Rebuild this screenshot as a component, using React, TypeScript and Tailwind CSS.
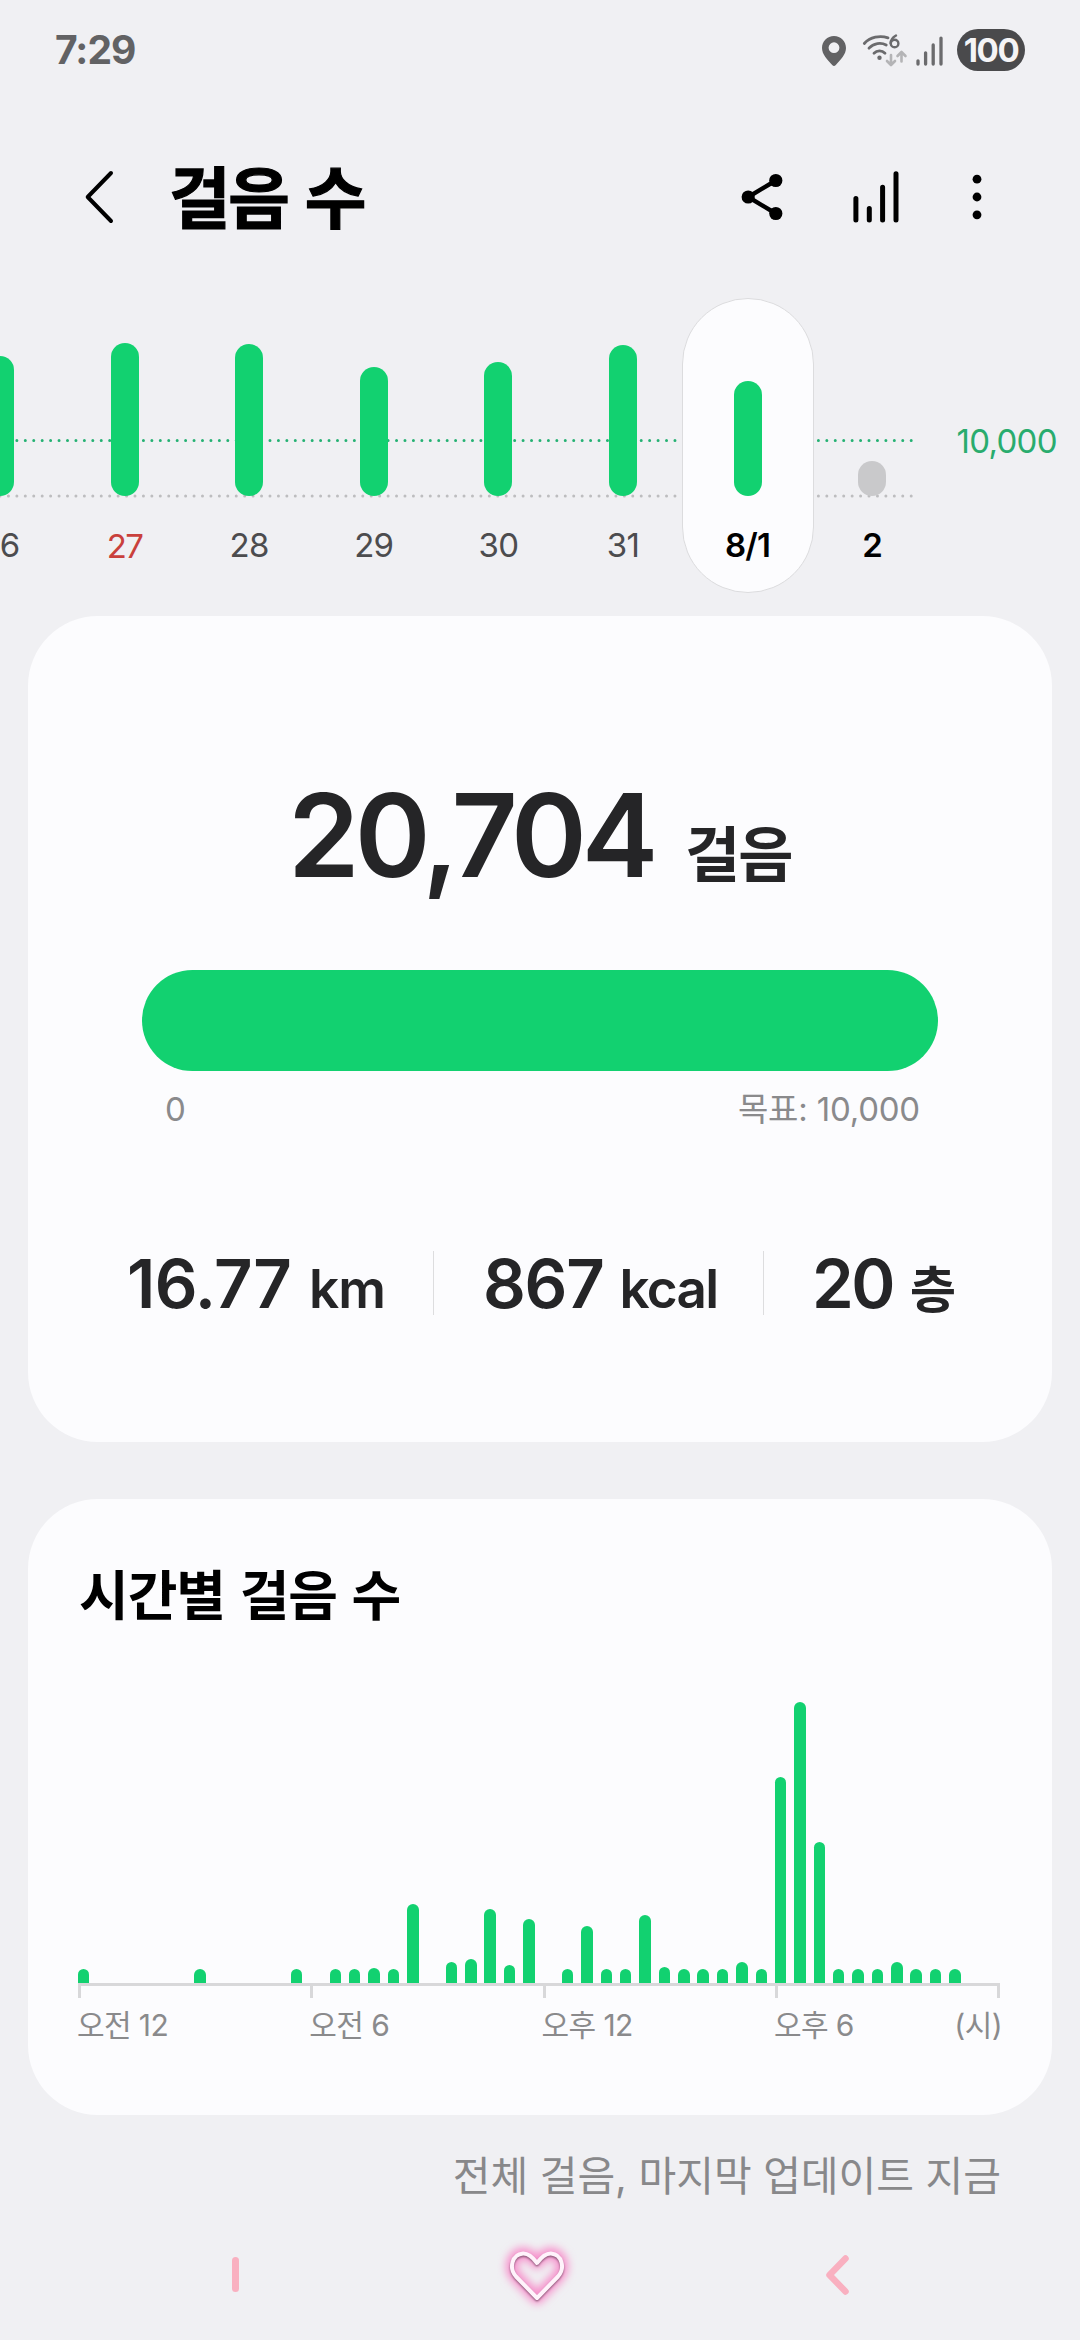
import React from "react";

const days = [
    { label: "26", height: 140 },
    { label: "27", height: 153, holiday: true },
    { label: "28", height: 152 },
    { label: "29", height: 129 },
    { label: "30", height: 134 },
    { label: "31", height: 151 },
    { label: "8/1", height: 115, selected: true },
    { label: "2", height: 35, today: true },
];

// bar heights in px, one per 30 minutes
const halfHours = [
    14, 0, 0, 0, 0, 0, 14, 0, 0, 0, 0, 14,
    0, 14, 14, 15, 14, 79, 0, 21, 24, 74, 18, 64,
    0, 14, 57, 14, 14, 68, 16, 14, 14, 14, 21, 14,
    206, 281, 141, 14, 14, 14, 21, 14, 14, 14,
];

const hourLabels = ["오전 12", "오전 6", "오후 12", "오후 6"];

function StatusBar() {
    return (
        <div className="flex h-[100px] items-center justify-between pl-[55px] pr-[55px]">
            <p className="text-[39px] leading-[60px] font-bold tracking-[-1px] text-[#626264]">7:29</p>
            <div className="flex items-center">
                <svg width="24" height="30" viewBox="0 0 24 30" className="mr-[16px] mt-[1px]">
                    <path
                        fillRule="evenodd"
                        fill="#626264"
                        d="M12 0C5.2 0 0 5.2 0 12c0 6.500 5.500 11.500 10.200 17q1.800 1.800 3.600 0C18.500 23.500 24 18.500 24 12 24 5.200 18.800 0 12 0Zm0 6.300a5.400 5.400 0 1 1 0 10.800a5.400 5.400 0 0 1 0-10.800Z"
                    />
                </svg>
                <svg width="46" height="34" viewBox="862 34 46 34" className="mr-[8px]" fill="none" strokeLinecap="round">
                    <g stroke="#6b6b6d" strokeWidth="2.800">
                        <path d="M864.300 44.500C870 37.800 880 36.200 888 38.800" />
                        <path d="M869 49.200C873.500 44 881 43.200 886.200 46" />
                        <path d="M874 54.200C877 51.200 882 51.200 885 54.200" />
                        <path d="M896 36.500C892.500 38.500 890.600 41.500 890.600 44.200" strokeWidth="2.400" />
                        <circle cx="894.600" cy="44.500" r="3.800" strokeWidth="2.400" />
                    </g>
                    <circle cx="879.500" cy="58.800" r="2.200" fill="#6b6b6d" />
                    <g stroke="#b4b4b6" strokeWidth="2.600" strokeLinejoin="round">
                        <path d="M891 56V65.500M887 62l4 4l4-4" />
                        <path d="M901.500 62.500V53.500M897.500 57l4-4l4 4" />
                    </g>
                </svg>
                <svg width="27" height="30" viewBox="916 35.500 27 30" className="mr-[14px] mt-[1px]" stroke="#6b6b6d" strokeWidth="3.300" strokeLinecap="round">
                    <path d="M918 60.300V63.500M925.600 52.300V63.500M933.200 44.500V63.500M941 37.600V63.500" />
                </svg>
                <div className="flex h-[42px] w-[68px] items-center justify-center rounded-full bg-[#4a4a4c]">
                    <span className="text-[33px] leading-[42px] font-bold tracking-[-1.400px] text-[#f4f4f6]">100</span>
                </div>
            </div>
        </div>
    );
}

function Header() {
    return (
        <div className="flex h-[194px] items-center pl-[84px]">
            <svg width="32" height="56" viewBox="84 169 32 56" fill="none" stroke="#000" strokeWidth="4" strokeLinecap="round" strokeLinejoin="round">
                <path d="M111 173L87.700 197L111 221" />
            </svg>
            <h1 className="mt-[4px] ml-[53px] w-[570px] text-[67px] leading-[80px] font-bold tracking-[-2.500px] [word-spacing:4px] text-black [-webkit-text-stroke:1.200px_black]">
                걸음 수
            </h1>
            <svg width="45" height="50" viewBox="739 172 45 50">
                <path d="M775.800 180.500L748.200 197L775.800 213.500" fill="none" stroke="#000" strokeWidth="4.400" />
                <circle cx="775.800" cy="180.500" r="6.600" />
                <circle cx="748.200" cy="197" r="6.600" />
                <circle cx="775.800" cy="213.500" r="6.600" />
            </svg>
            <svg width="50" height="54" viewBox="851 170 50 54" className="ml-[67px]" stroke="#000" strokeWidth="5" strokeLinecap="round">
                <path d="M855.900 198.500V220M869.300 208.500V220M882.600 187.300V220M896 173.800V220" />
            </svg>
            <svg width="12" height="48" viewBox="0 0 12 48" className="ml-[70px]">
                <circle cx="6" cy="6.200" r="4.400" />
                <circle cx="6" cy="24" r="4.400" />
                <circle cx="6" cy="41.800" r="4.400" />
            </svg>
        </div>
    );
}

function DayChart() {
    return (
        <div className="relative flex h-[322px] overflow-hidden">
            <svg width="914" height="322" className="absolute top-0 left-0" strokeWidth="3" strokeLinecap="round" strokeDasharray="0 8.437">
                <path d="M0 146.500H912" stroke="#25b173" />
                <path d="M0 202H912" stroke="#bdbdbf" />
            </svg>
            <div className="-ml-[62.300px] flex shrink-0">
                {days.map((day) => (
                    <div key={day.label} className="relative flex w-[124.600px] flex-col items-center">
                        {day.selected && (
                            <div className="absolute top-[4px] left-1/2 h-[295px] w-[132px] -translate-x-1/2 rounded-full border border-[#dcdcde] bg-[#fcfcfe]" />
                        )}
                        <div className="relative flex h-[202px] items-end">
                            <div
                                className={day.today ? "w-[28px] rounded-full bg-[#c9c9cb]" : "w-[28px] rounded-full bg-[#12d170]"}
                                style={{ height: day.height }}
                            />
                        </div>
                        <p
                            className={
                                day.holiday
                                    ? "relative mt-[30px] text-[33px] leading-[40px] tracking-[-1.500px] text-[#c9403c]"
                                    : day.selected || day.today
                                      ? "relative mt-[29px] text-[33px] leading-[40px] font-semibold tracking-[-0.800px] text-black"
                                      : "relative mt-[29px] text-[33px] leading-[40px] tracking-[-0.700px] text-[#4c4c4e]"
                            }
                        >
                            {day.label}
                        </p>
                    </div>
                ))}
            </div>
            <p className="mt-[127px] ml-[22px] text-[33px] leading-[40px] tracking-[-0.700px] text-[#29ac6e]">10,000</p>
        </div>
    );
}

function SummaryCard() {
    return (
        <div className="mx-[28px] h-[826px] rounded-[70px] bg-[#fcfcfe] pt-[150px] text-[#252527]">
            <div className="flex h-[140px] items-baseline pl-[260px] leading-[140px] font-semibold">
                <span className="w-[397px] text-[115px] tracking-[-5px]">20,704</span>
                <span className="text-[60px] tracking-[-2px]">걸음</span>
            </div>
            <div className="mt-[64px] ml-[114px] h-[101px] w-[796px] rounded-full bg-[#12d170]" />
            <div className="mt-[18px] flex justify-between pr-[132px] pl-[137px] text-[33px] leading-[40px] tracking-[-0.200px] text-[#8a8a8c]">
                <span>0</span>
                <span>목표: 10,000</span>
            </div>
            <div className="mt-[114px] flex h-[80px] items-center leading-[80px] font-semibold">
                <p className="mt-[20px] w-[405px] pl-[99px] whitespace-nowrap">
                    <span className="text-[67px] tracking-[-0.700px]">16.77</span>
                    <span className="ml-[18px] text-[53px] tracking-[-1px]">km</span>
                </p>
                <div className="h-[64px] w-px bg-[#dddddf]" />
                <p className="mt-[20px] w-[329px] pl-[49px] whitespace-nowrap">
                    <span className="text-[67px] tracking-[-1.300px]">867</span>
                    <span className="ml-[16px] text-[53px] tracking-[-1.700px]">kcal</span>
                </p>
                <div className="h-[64px] w-px bg-[#dddddf]" />
                <p className="mt-[20px] pl-[48px] whitespace-nowrap">
                    <span className="text-[67px] tracking-[-2.500px]">20</span>
                    <span className="ml-[17px] text-[50px]">층</span>
                </p>
            </div>
        </div>
    );
}

function HourlyCard() {
    return (
        <div className="mx-[28px] mt-[57px] h-[616px] rounded-[70px] bg-[#fcfcfe] pt-[68px]">
            <h2 className="pl-[51px] text-[54px] leading-[60px] font-semibold tracking-[-1px] [word-spacing:2px] text-black">시간별 걸음 수</h2>
            <div className="ml-[46px] flex h-[356px] items-end">
                {halfHours.map((height, i) => (
                    <div key={i} className="flex w-[19.360px] shrink-0 justify-center">
                        <div className="w-[11.500px] rounded-t-full bg-[#12d170]" style={{ height }} />
                    </div>
                ))}
            </div>
            <div className="ml-[50px] flex h-[15px] w-[922px] border-t-[3px] border-r-[3px] border-[#d8d8da]">
                {hourLabels.map((label) => (
                    <div key={label} className="w-[232.300px] shrink-0 border-l-[3px] border-[#d8d8da] last:w-[218px]" />
                ))}
            </div>
            <div className="mt-[7px] ml-[49px] flex w-[925px] text-[30px] leading-[40px] tracking-[-0.600px] text-[#8a8a8c]">
                {hourLabels.map((label) => (
                    <p key={label} className="w-[232.300px] last-of-type:w-auto">{label}</p>
                ))}
                <span className="ml-auto">(시)</span>
            </div>
        </div>
    );
}

function NavBar() {
    return (
        <div className="flex h-[134px] items-center pt-[3px]">
            <div className="ml-[232px] h-[35px] w-[7px] rounded-full bg-[#f9b0c0]" />
            <svg width="100" height="96" viewBox="0 0 100 96" className="ml-[248px]" fill="none" strokeLinejoin="round">
                <defs>
                    <filter id="glow" x="-30%" y="-30%" width="160%" height="160%">
                        <feGaussianBlur stdDeviation="4" />
                    </filter>
                    <filter id="shade" x="-30%" y="-30%" width="160%" height="160%">
                        <feGaussianBlur stdDeviation="0.8" />
                    </filter>
                </defs>
                <path d="M50 71L29 49.500C21.500 41 25 27.500 36 26.500C42 26.200 46 30.500 50 36C54 30.500 58 26.200 64 26.500C75 27.500 78.500 41 71 49.500Z" stroke="#f78fcb" strokeWidth="12" filter="url(#glow)" />
                <path d="M50 72.500L29 51C21.500 42.500 25 29 36 28C42 27.700 46 32 50 37.500C54 32 58 27.700 64 28C75 29 78.500 42.500 71 51Z" stroke="#80506e" strokeWidth="3.500" filter="url(#shade)" />
                <path d="M50 71L29 49.500C21.500 41 25 27.500 36 26.500C42 26.200 46 30.500 50 36C54 30.500 58 26.200 64 26.500C75 27.500 78.500 41 71 49.500Z" stroke="#fff3fb" strokeWidth="4" />
            </svg>
            <svg width="28" height="44" viewBox="0 0 28 44" className="ml-[236px]" fill="none" stroke="#f9b0c0" strokeWidth="6.500" strokeLinecap="round" strokeLinejoin="round">
                <path d="M22.500 5.500L6.500 22L22.500 38.500" />
            </svg>
        </div>
    );
}

export default function App() {
    return (
        <div className="h-[2340px] w-[1080px] overflow-hidden bg-[#f0f0f3] font-[Inter,'Noto_Sans_CJK_KR',sans-serif]">
            <StatusBar />
            <Header />
            <DayChart />
            <SummaryCard />
            <HourlyCard />
            <p className="mt-[31px] pr-[79px] text-right text-[41px] leading-[60px] text-[#88888a]">
                전체 걸음, 마지막 업데이트 지금
            </p>
            <NavBar />
        </div>
    );
}
